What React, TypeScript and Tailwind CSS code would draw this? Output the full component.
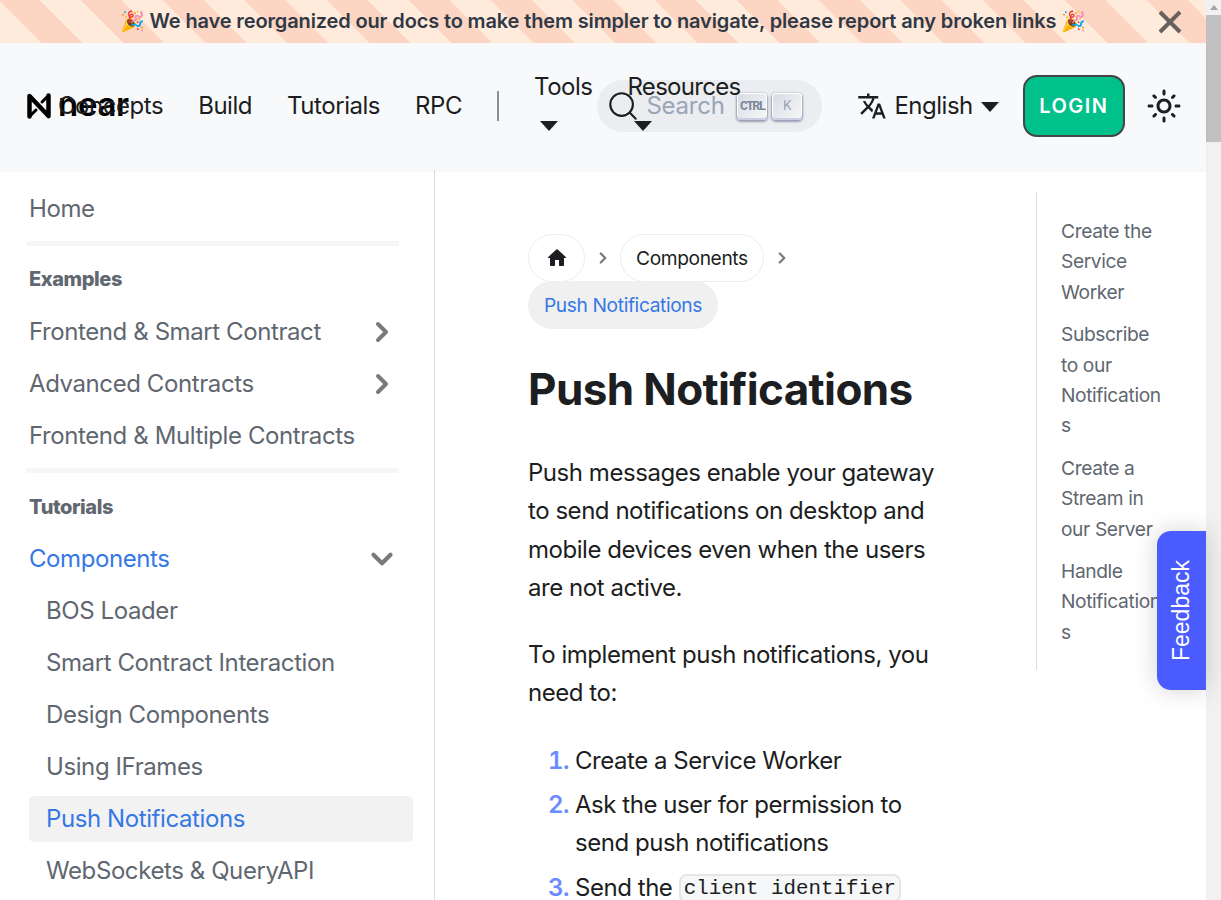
import { ChevronDown, ChevronRight } from "lucide-react";

const exampleItems = [
  { label: "Frontend & Smart Contract", arrow: true },
  { label: "Advanced Contracts", arrow: true },
  { label: "Frontend & Multiple Contracts", arrow: false },
];

const componentItems = ["BOS Loader", "Smart Contract Interaction", "Design Components", "Using IFrames"];

const tocItems = ["Create the Service Worker", "Subscribe to our Notifications", "Create a Stream in our Server", "Handle Notifications"];

function Caret({ className }: { className?: string }) {
  return <span className={`inline-block w-0 h-0 border-x-[9px] border-x-transparent border-t-[10px] border-t-[#1c1e21] ${className ?? ""}`} />;
}

function NearLogo() {
  return (
    <div className="flex items-center gap-[7px] mr-[-72px] shrink-0 text-black">
      <svg width="24" height="26" viewBox="0 0 24 26" fill="none" stroke="currentColor" strokeWidth="4.5" strokeLinecap="round" strokeLinejoin="round">
        <path d="M2.5 23.5 V3 L21.5 23 V2.5" />
        <path d="M2.5 23.5 L9 17 M21.5 2.5 L15 9" strokeWidth="3" />
      </svg>
      <span className="w-[72px] text-[33px] leading-none font-semibold tracking-[-0.3px] mb-[3px]">near</span>
    </div>
  );
}

function NavMenu({ label, tight }: { label: string; tight?: boolean }) {
  return (
    <div className="ml-[35px] mt-[1px] flex flex-col items-start relative z-10">
      <span className={`text-[24px] leading-[38.4px] ${tight ? "tracking-[-0.03em]" : "tracking-[-0.02em]"}`}>{label}</span>
      <span className="h-[38.4px] flex items-center pl-[6px]">
        <Caret />
      </span>
    </div>
  );
}

function NavBar() {
  return (
    <header className="h-[127px] shrink-0 flex items-center pl-[27px] pb-[1px] bg-[#f8f9fb] text-[#1c1e21] shadow-[0_1px_2px_0_rgba(0,0,0,0.06)] relative z-10">
      <NearLogo />
      <nav className="flex items-center gap-[35px] text-[24px] tracking-[-0.019em]">
        <span>Concepts</span>
        <span>Build</span>
        <span>Tutorials</span>
        <span>RPC</span>
      </nav>
      <div className="w-[2px] h-[30px] bg-[#8d8f92] ml-[35px]" />
      <NavMenu label="Tools" />
      <NavMenu label="Resources" tight />
      <div className="ml-[-143px] w-[225px] h-[52px] rounded-[26px] bg-[#ebedf0] flex items-center pl-[11px] shrink-0">
        <svg width="30" height="30" viewBox="0 0 20 20" fill="none" stroke="#1c1e21" strokeWidth="1.4" strokeLinecap="round" strokeLinejoin="round">
          <path d="M14.386 14.386l4.0877 4.0877-4.0877-4.0877c-2.9418 2.9419-7.7115 2.9419-10.6533 0-2.9419-2.9418-2.9419-7.7115 0-10.6533 2.9418-2.9419 7.7115-2.9419 10.6533 0 2.9419 2.9418 2.9419 7.7115 0 10.6533z" />
        </svg>
        <span className="ml-[8px] text-[24px] text-[#9aa5b8] w-[91px]">Search</span>
        <div className="flex gap-[5px]">
          <span className="flex items-start justify-center h-[27px] w-[30px] pt-[4px] rounded-[4px] bg-[linear-gradient(-225deg,#d5dbe4,#f8f8f8)] shadow-[inset_0_-2px_0_0_#cdcde6,inset_0_0_1px_1px_#fff,0_1px_2px_1px_rgba(30,35,90,0.4)] text-[#7e8699] font-['Liberation_Mono',monospace] text-[13px] font-bold tracking-[-1.6px]">CTRL</span>
          <span className="flex items-start justify-center h-[27px] w-[30px] pt-[3px] rounded-[4px] bg-[linear-gradient(-225deg,#d5dbe4,#f8f8f8)] shadow-[inset_0_-2px_0_0_#cdcde6,inset_0_0_1px_1px_#fff,0_1px_2px_1px_rgba(30,35,90,0.4)] text-[#969faf] text-[13px]">K</span>
        </div>
      </div>
      <div className="ml-[35px] flex items-center">
        <svg width="30" height="30" viewBox="0 0 24 24" fill="#1c1e21">
          <path d="M12.87 15.07l-2.54-2.51.03-.03c1.74-1.94 2.98-4.17 3.71-6.53H17V4h-7V2H8v2H1v1.99h11.17C11.5 7.92 10.44 9.75 9 11.35 8.07 10.32 7.3 9.19 6.69 8h-2c.73 1.63 1.73 3.17 2.98 4.56l-5.09 5.02L4 19l5-5 3.11 3.11.76-2.04zM18.5 10h-2L12 22h2l1.12-3h4.75L21 22h2l-4.5-12zm-2.62 7l1.62-4.33L19.12 17h-3.24z" />
        </svg>
        <span className="ml-[7px] text-[24px] tracking-[-0.02em]">English</span>
        <Caret className="ml-[8px] mt-[2px]" />
      </div>
      <button type="button" className="ml-[24px] w-[102px] h-[62px] rounded-[14px] border-2 border-[#444] bg-[#00c08b] text-white text-[20px] font-semibold tracking-[1.5px]">
        LOGIN
      </button>
      <svg className="ml-[21px]" width="36" height="36" viewBox="0 0 24 24" fill="#1c1e21">
        <path d="M12,9c1.65,0,3,1.35,3,3s-1.35,3-3,3s-3-1.35-3-3S10.35,9,12,9 M12,7c-2.76,0-5,2.24-5,5s2.24,5,5,5s5-2.24,5-5 S14.76,7,12,7L12,7z M2,13l2,0c0.55,0,1-0.45,1-1s-0.45-1-1-1l-2,0c-0.55,0-1,0.45-1,1S1.45,13,2,13z M20,13l2,0c0.55,0,1-0.45,1-1 s-0.45-1-1-1l-2,0c-0.55,0-1,0.45-1,1S19.45,13,20,13z M11,2v2c0,0.55,0.45,1,1,1s1-0.45,1-1V2c0-0.55-0.45-1-1-1S11,1.45,11,2z M11,20v2c0,0.55,0.45,1,1,1s1-0.45,1-1v-2c0-0.55-0.45-1-1-1C11.45,19,11,19.45,11,20z M5.99,4.58c-0.39-0.39-1.03-0.39-1.41,0 c-0.39,0.39-0.39,1.03,0,1.41l1.06,1.06c0.39,0.39,1.03,0.39,1.41,0s0.39-1.03,0-1.41L5.99,4.58z M18.36,16.95 c-0.39-0.39-1.03-0.39-1.41,0c-0.39,0.39-0.39,1.03,0,1.41l1.06,1.06c0.39,0.39,1.03,0.39,1.41,0c0.39-0.39,0.39-1.03,0-1.41 L18.36,16.95z M19.42,5.99c0.39-0.39,0.39-1.03,0-1.41c-0.39-0.39-1.03-0.39-1.41,0l-1.06,1.06c-0.39,0.39-0.39,1.03,0,1.41 s1.03,0.39,1.41,0L19.42,5.99z M7.05,18.36c0.39-0.39,0.39-1.03,0-1.41c-0.39-0.39-1.03-0.39-1.41,0l-1.06,1.06 c-0.39,0.39-0.39,1.03,0,1.41s1.03,0.39,1.41,0L7.05,18.36z" />
      </svg>
    </header>
  );
}

function SidebarRow({ label, arrow }: { label: string; arrow?: boolean }) {
  return (
    <div className="h-[52px] flex items-center justify-between pl-[29px] pr-[40px]">
      <span>{label}</span>
      {arrow ? <ChevronRight size={32} strokeWidth={3} className="text-[#7a7a7a] mr-[-4px]" /> : null}
    </div>
  );
}

function Sidebar() {
  return (
    <aside className="w-[435px] shrink-0 border-r border-[#dadde1] pt-[13px] text-[24px] text-[#606770] tracking-[-0.017em]">
      <SidebarRow label="Home" />
      <div className="h-[5px] mt-[6px] ml-[26px] w-[373px] bg-[#f6f6f6]" />
      <p className="mt-[20px] mb-[14px] pl-[29px] h-[26px] leading-[26px] text-[20px] font-extrabold">Examples</p>
      {exampleItems.map((item) => (
        <SidebarRow key={item.label} label={item.label} arrow={item.arrow} />
      ))}
      <div className="h-[5px] mt-[6px] ml-[26px] w-[373px] bg-[#f6f6f6]" />
      <p className="mt-[21px] mb-[13px] pl-[29px] h-[26px] leading-[26px] text-[20px] font-extrabold">Tutorials</p>
      <div className="h-[52px] flex items-center justify-between pl-[29px] pr-[40px] text-[#3578e5]">
        <span>Components</span>
        <ChevronDown size={34} strokeWidth={3} className="text-[#7a7a7a] mr-[-5px]" />
      </div>
      {componentItems.map((label) => (
        <div key={label} className="h-[52px] flex items-center pl-[46px]">
          {label}
        </div>
      ))}
      <div className="mt-[3px] ml-[29px] w-[384px] h-[46px] pl-[17px] flex items-center rounded-[5px] bg-[#f2f2f2] text-[#3578e5]">
        Push Notifications
      </div>
      <div className="mt-[3px] h-[52px] flex items-center pl-[46px]">WebSockets &amp; QueryAPI</div>
    </aside>
  );
}

function Breadcrumbs() {
  return (
    <div className="flex flex-wrap items-center text-[19.2px] tracking-[-0.02em] w-[420px]">
      <span className="w-[57px] h-[48px] rounded-[24px] border border-[#ebedf0] flex items-center justify-center">
        <svg width="24" height="24" viewBox="0 0 24 24" fill="#1c1e21">
          <path d="M10 19v-5h4v5c0 .55.45 1 1 1h3c.55 0 1-.45 1-1v-7h1.7c.46 0 .68-.57.33-.87L12.67 3.6c-.38-.34-.96-.34-1.34 0l-8.36 7.53c-.34.3-.13.87.33.87H5v7c0 .55.45 1 1 1h3c.55 0 1-.45 1-1z" />
        </svg>
      </span>
      <ChevronRight size={18} strokeWidth={3} className="text-[#7a7a7a] mx-[8.5px]" />
      <span className="h-[48px] px-[15px] rounded-[24px] border border-[#ebedf0] flex items-center">Components</span>
      <ChevronRight size={18} strokeWidth={3} className="text-[#7a7a7a] mx-[9px]" />
      <span className="h-[48px] mt-[-1px] px-[16px] rounded-[24px] bg-[#f0f0f0] text-[#3578e5] flex items-center">Push Notifications</span>
    </div>
  );
}

function Article() {
  return (
    <article className="ml-[93px] w-[420px] shrink-0 pt-[64px] text-[24px] leading-[38.4px] text-[#1c1e21] tracking-[-0.019em]">
      <Breadcrumbs />
      <h1 className="mt-[31px] text-[44px] leading-[58px] font-bold tracking-[-0.014em]">Push Notifications</h1>
      <p className="mt-[36px]">Push messages enable your gateway to send notifications on desktop and mobile devices even when the users are not active.</p>
      <p className="mt-[28px]">To implement push notifications, you need to:</p>
      <ol className="mt-[30px]">
        <li className="flex">
          <span className="w-[47px] pr-[6px] text-right shrink-0 font-semibold tabular-nums text-[#6b8cff]">1.</span>
          <span>Create a Service Worker</span>
        </li>
        <li className="flex mt-[5px]">
          <span className="w-[47px] pr-[6px] text-right shrink-0 font-semibold tabular-nums text-[#6b8cff]">2.</span>
          <span>Ask the user for permission to send push notifications</span>
        </li>
        <li className="flex mt-[6px]">
          <span className="w-[47px] pr-[6px] text-right shrink-0 font-semibold tabular-nums text-[#6b8cff]">3.</span>
          <span>
            Send the{" "}
            <code className="font-['Liberation_Mono',monospace] tracking-normal text-[20.8px] align-[2px] bg-[#f6f7f8] border-2 border-[#e5e5e5] rounded-[8px] px-[3px] py-[1px]">client identifier</code>
          </span>
        </li>
      </ol>
    </article>
  );
}

function Toc() {
  return (
    <div className="ml-[88px] mt-[22px] self-start w-[130px] shrink-0 h-[478px] border-l border-[#dadde1] pl-[24px] pt-[24px] text-[19.2px] leading-[30.4px] text-[#606770] tracking-[-0.02em]">
      {tocItems.map((item) => (
        <p key={item} className="w-[103px] mb-[12px] [overflow-wrap:anywhere]">
          {item}
        </p>
      ))}
    </div>
  );
}

export default function App() {
  return (
    <div className="h-[900px] overflow-hidden flex bg-[#f1f1f1] font-['Inter',sans-serif] tracking-[-0.014em]">
      <div className="w-[1206px] shrink-0 flex flex-col relative bg-white">
        <div className="h-[43px] shrink-0 relative flex items-center justify-center pb-[1px] bg-[repeating-linear-gradient(45deg,#ffebdb,#ffebdb_29px,#fcd6c3_29px,#fcd6c3_58px)] text-[20px] font-semibold tracking-[-0.007em] text-[#303846]">
          <span>🎉 We have reorganized our docs to make them simpler to navigate, please report any broken links 🎉</span>
          <svg className="absolute right-[24px] top-[10px]" width="24" height="24" viewBox="0 0 24 24" fill="none" stroke="#66615e" strokeWidth="4">
            <path d="M2 2 L22 22 M22 2 L2 22" />
          </svg>
        </div>
        <NavBar />
        <div className="flex flex-1 min-h-0">
          <Sidebar />
          <Article />
          <Toc />
        </div>
        <div className="absolute right-0 top-[531px] w-[49px] h-[159px] rounded-l-[14px] bg-[#4a5cff] flex items-center justify-center shadow-[0_0_24px_rgba(0,0,0,0.18)]">
          <span className="[writing-mode:vertical-rl] rotate-180 text-white text-[23px] tracking-normal font-['Liberation_Sans',sans-serif]">Feedback</span>
        </div>
      </div>
      <div className="w-[15px] shrink-0 flex flex-col items-center">
        <div className="h-[15px] w-full flex items-center justify-center">
          <span className="w-0 h-0 border-x-[4px] border-x-transparent border-b-[5px] border-b-[#a3a3a3]" />
        </div>
        <div className="w-full h-[127px] bg-[#c1c1c1]" />
      </div>
    </div>
  );
}
